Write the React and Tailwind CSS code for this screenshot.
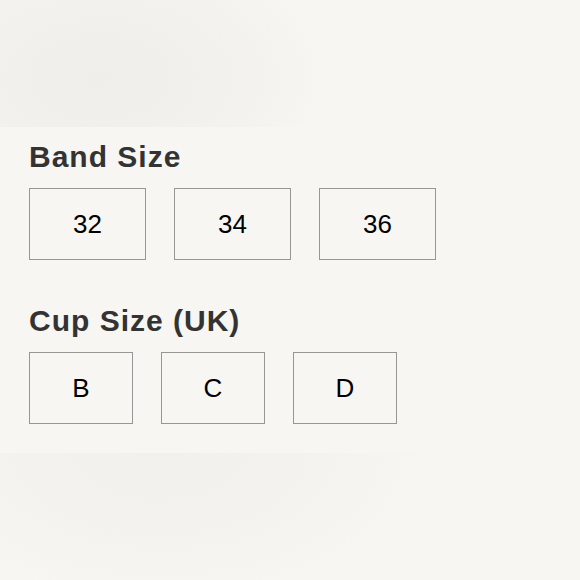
import React from 'react';

const bands = ['32', '34', '36'];
const cups = ['B', 'C', 'D'];

const Option = ({ label, w }) => (
  <button
    className={`${w} h-[72px] flex items-center justify-center border-[1.5px] border-[#969694] bg-transparent text-[26px] text-black`}
    style={{ fontFamily: '"Liberation Sans", Arial, sans-serif' }}
  >
    {label}
  </button>
);

export default function App() {
  const heading = { fontFamily: '"Liberation Sans", Arial, sans-serif' };
  return (
    <div className="w-[580px] h-[580px] overflow-hidden bg-[#f7f6f2] flex flex-col">
      <div className="h-[127px] w-[444px] shrink-0 bg-[radial-gradient(ellipse_230px_140px_at_100px_78px,#efeeea_0%,#f1f0ec_40%,#f4f3ef_75%,#f7f6f2_100%)]" />

      <section className="h-[326px] shrink-0 px-[29px] pt-[12px]">
        <h2 className="text-[30px] font-bold tracking-[1px] text-[#333] leading-[36px]" style={heading}>
          Band Size
        </h2>
        <div className="mt-[13px] flex gap-[28px]">
          {bands.map((b) => (
            <Option key={b} label={b} w="w-[117px]" />
          ))}
        </div>

        <h2 className="mt-[43px] text-[30px] font-bold tracking-[1px] text-[#333] leading-[36px]" style={heading}>
          Cup Size (UK)
        </h2>
        <div className="mt-[13px] flex gap-[28px]">
          {cups.map((c) => (
            <Option key={c} label={c} w="w-[104px]" />
          ))}
        </div>
      </section>

      <div className="flex-1 w-[420px] bg-[radial-gradient(ellipse_270px_150px_at_160px_0px,#f1f0ec_0%,#f3f2ee_45%,#f5f4f0_75%,#f7f6f2_100%)]" />
    </div>
  );
}
